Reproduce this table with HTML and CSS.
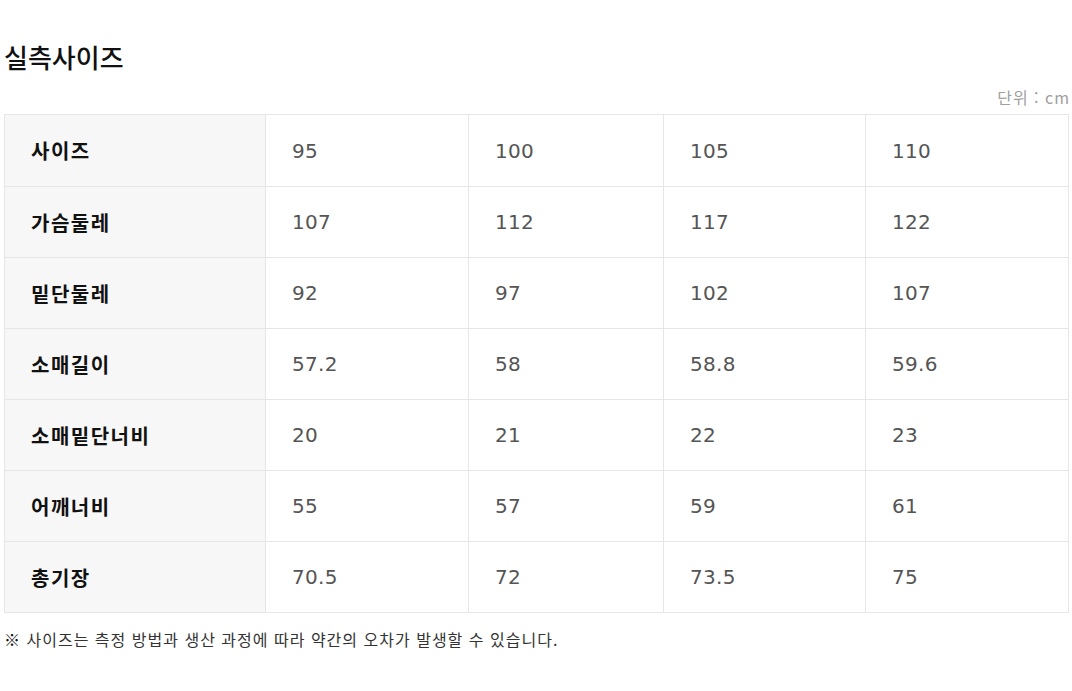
FILE: index.html
```html
<!DOCTYPE html>
<html lang="ko">
<head>
<meta charset="utf-8">
<link rel="stylesheet" href="styles.css">
</head>
<body>
<div class="wrap">
  <h2 class="title">실측사이즈</h2>
  <div class="unit">단위 : cm</div>
  <table class="size-table">
    <colgroup>
      <col class="c0"><col class="c1"><col class="c2"><col class="c3"><col class="c4">
    </colgroup>
    <tbody>
      <tr class="first"><th>사이즈</th><td>95</td><td>100</td><td>105</td><td>110</td></tr>
      <tr><th>가슴둘레</th><td>107</td><td>112</td><td>117</td><td>122</td></tr>
      <tr><th>밑단둘레</th><td>92</td><td>97</td><td>102</td><td>107</td></tr>
      <tr><th>소매길이</th><td>57.2</td><td>58</td><td>58.8</td><td>59.6</td></tr>
      <tr><th>소매밑단너비</th><td>20</td><td>21</td><td>22</td><td>23</td></tr>
      <tr><th>어깨너비</th><td>55</td><td>57</td><td>59</td><td>61</td></tr>
      <tr><th>총기장</th><td>70.5</td><td>72</td><td>73.5</td><td>75</td></tr>
    </tbody>
  </table>
  <p class="note"><span class="mark">※</span> 사이즈는 측정 방법과 생산 과정에 따라 약간의 오차가 발생할 수 있습니다.</p>
</div>
</body>
</html>
```

FILE: styles.css
```css
html, body {
  margin: 0;
  padding: 0;
  background: #fff;
}
body {
  font-family: "DejaVu Sans", "Noto Sans CJK KR", sans-serif;
  color: #222;
}
.wrap {
  padding: 0 4px;
}
.title {
  margin: 0;
  padding-top: 40px;
  font-family: "Noto Sans CJK KR", sans-serif;
  font-size: 26px;
  font-weight: 500;
  line-height: 34px;
  color: #111;
}
.unit {
  text-align: right;
  font-family: "Noto Sans CJK KR", sans-serif;
  font-size: 16px;
  line-height: 20px;
  color: #a0a0a0;
  letter-spacing: 1px;
  margin-top: 13px;
  margin-bottom: 7px;
  margin-right: -2px;
}
.size-table {
  width: 1064px;
  border-collapse: collapse;
  table-layout: fixed;
}
.c0 { width: 261px; }
.c1 { width: 203px; }
.c2 { width: 195px; }
.c3 { width: 202px; }
.c4 { width: 203px; }
.size-table th,
.size-table td {
  border: 1px solid #e6e6e6;
  height: 71px;
  padding: 0 0 0 26px;
  text-align: left;
  vertical-align: middle;
  box-sizing: border-box;
}
.size-table .first th,
.size-table .first td {
  height: 72px;
}
.size-table th {
  background: #f7f7f7;
  font-family: "Noto Sans CJK KR", sans-serif;
  font-size: 20px;
  font-weight: 700;
  letter-spacing: 1.5px;
  color: #111;
}
.size-table td {
  font-size: 20px;
  letter-spacing: 0.3px;
  color: #555;
}
.note {
  margin: 16px 0 0;
  font-family: "Noto Sans CJK KR", sans-serif;
  font-size: 16px;
  line-height: 20px;
  letter-spacing: 1px;
  color: #333;
}
.mark {
  font-weight: 700;
  color: #111;
}
```
